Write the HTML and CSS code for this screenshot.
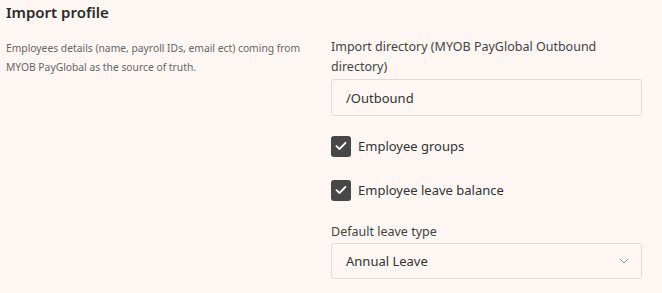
FILE: index.html
```html
<!DOCTYPE html>
<html lang="en">
<head>
    <meta charset="UTF-8">
    <meta name="viewport" content="width=device-width, initial-scale=1.0">
    <title>Import profile</title>
    <link rel="stylesheet" href="styles.css">
</head>
<body>
    <div class="section">
        <h2>Import profile</h2>
        <div class="columns">
            <p class="help">Employees details (name, payroll IDs, email ect) coming from MYOB PayGlobal as the source of truth.</p>

            <form class="fields">
                <label class="field-label" for="importDir">Import directory (MYOB PayGlobal Outbound directory)</label>
                <input type="text" id="importDir" class="text-input" value="/Outbound">

                <label class="check">
                    <span class="box">
                        <svg width="12" height="10" viewBox="0 0 12 10"><path d="M1.5 5.2 L4.5 8 L10.5 1.8" fill="none" stroke="#fff" stroke-width="1.8" stroke-linecap="round" stroke-linejoin="round"/></svg>
                    </span>
                    Employee groups
                </label>

                <label class="check">
                    <span class="box">
                        <svg width="12" height="10" viewBox="0 0 12 10"><path d="M1.5 5.2 L4.5 8 L10.5 1.8" fill="none" stroke="#fff" stroke-width="1.8" stroke-linecap="round" stroke-linejoin="round"/></svg>
                    </span>
                    Employee leave balance
                </label>

                <label class="field-label leave-label" for="leaveType">Default leave type</label>
                <div class="select">
                    <span>Annual Leave</span>
                    <svg width="10" height="6" viewBox="0 0 10 6"><path d="M1 1 L5 5 L9 1" fill="none" stroke="#888" stroke-width="1"/></svg>
                </div>
            </form>
        </div>
    </div>
</body>
</html>
```

FILE: styles.css
```css
body {
    font-family: "Noto Sans", sans-serif;
    margin: 0;
    padding: 0;
    background: #fdf6f3;
    color: #333;
}
.section {
    padding: 0 6px;
}
h2 {
    font-size: 15px;
    font-weight: 600;
    color: #2b2b2b;
    margin: 0;
    line-height: 24px;
}
.columns {
    display: flex;
    margin-top: 13px;
}
.help {
    width: 312px;
    margin: 2px 13px 0 0;
    font-size: 10.3px;
    line-height: 19px;
    color: #666;
}
.fields {
    width: 311px;
    display: flex;
    flex-direction: column;
}
.field-label {
    font-size: 12.5px;
    line-height: 20px;
    color: #444;
}
.text-input {
    margin-top: 2px;
    height: 37px;
    box-sizing: border-box;
    border: 1px solid #ddd;
    border-radius: 3px;
    background: transparent;
    padding: 0 14px;
    font-family: inherit;
    font-size: 13px;
    color: #333;
}
.check {
    display: flex;
    align-items: center;
    gap: 7px;
    font-size: 13px;
    color: #333;
    margin-top: 19px;
    height: 22px;
}
.check + .check {
    margin-top: 22px;
}
.box {
    width: 20px;
    height: 21px;
    background: #474747;
    border-radius: 3px;
    display: flex;
    align-items: center;
    justify-content: center;
}
.leave-label {
    margin-top: 21px;
}
.select {
    margin-top: 1px;
    height: 36px;
    box-sizing: border-box;
    border: 1px solid #ddd;
    border-radius: 3px;
    display: flex;
    align-items: center;
    justify-content: space-between;
    padding: 0 12px 0 14px;
    font-size: 13px;
    color: #333;
}
```
